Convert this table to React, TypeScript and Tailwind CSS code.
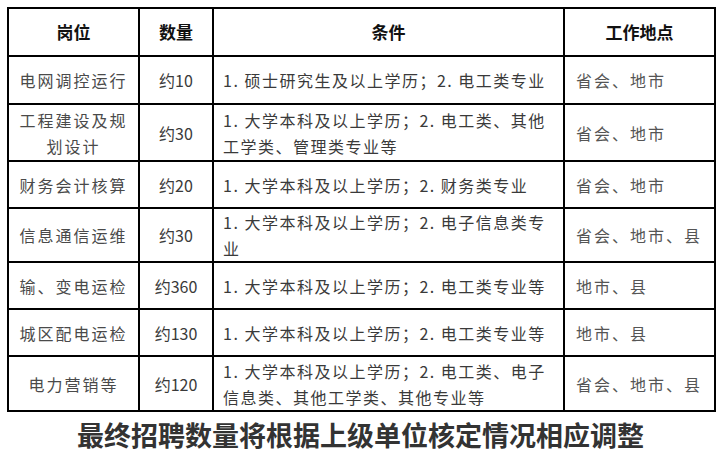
import React from 'react';

type Row = {
  post: React.ReactNode;
  count: string;
  cond: React.ReactNode;
  place: string;
  h: string;
};

const rows: Row[] = [
  { post: '电网调控运行', count: '约10', cond: '1. 硕士研究生及以上学历；2. 电工类专业', place: '省会、地市', h: 'h-[48px]' },
  {
    post: (
      <>
        工程建设及规
        <br />
        划设计
      </>
    ),
    count: '约30',
    cond: (
      <>
        1. 大学本科及以上学历；2. 电工类、其他
        <br />
        工学类、管理类专业等
      </>
    ),
    place: '省会、地市',
    h: 'h-[57px]',
  },
  { post: '财务会计核算', count: '约20', cond: '1. 大学本科及以上学历；2. 财务类专业', place: '省会、地市', h: 'h-[47px]' },
  {
    post: '信息通信运维',
    count: '约30',
    cond: (
      <>
        1. 大学本科及以上学历；2. 电子信息类专
        <br />
        业
      </>
    ),
    place: '省会、地市、县',
    h: 'h-[54px]',
  },
  { post: '输、变电运检', count: '约360', cond: '1. 大学本科及以上学历；2. 电工类专业等', place: '地市、县', h: 'h-[47px]' },
  { post: '城区配电运检', count: '约130', cond: '1. 大学本科及以上学历；2. 电工类专业等', place: '地市、县', h: 'h-[47px]' },
  {
    post: '电力营销等',
    count: '约120',
    cond: (
      <>
        1. 大学本科及以上学历；2. 电工类、电子
        <br />
        信息类、其他工学类、其他专业等
      </>
    ),
    place: '省会、地市、县',
    h: 'h-[55px]',
  },
];

const font = "font-['Noto_Sans_CJK_SC','Liberation_Sans',sans-serif]";

export default function App() {
  return (
    <div className={`w-[722px] min-h-[452px] bg-white pt-[7px] pl-[7px] ${font}`}>
      <table className="border-collapse table-fixed w-[707px] text-[#3a3a3a]">
        <colgroup>
          <col className="w-[131px]" />
          <col className="w-[74px]" />
          <col className="w-[351px]" />
          <col className="w-[151px]" />
        </colgroup>
        <thead>
          <tr className="h-[48px] text-[17px] font-bold text-[#111]">
            <th className="border-2 border-black text-center">岗位</th>
            <th className="border-2 border-black text-center">数量</th>
            <th className="border-2 border-black text-center">条件</th>
            <th className="border-2 border-black text-center">工作地点</th>
          </tr>
        </thead>
        <tbody className="text-[16px] leading-[26px]">
          {rows.map((r, i) => (
            <tr key={i} className={r.h}>
              <td className="border-2 border-black text-center whitespace-nowrap px-1 tracking-[2px] text-[#4a4a4a]">{r.post}</td>
              <td className="border-2 border-black text-center whitespace-nowrap">{r.count}</td>
              <td className="border-2 border-black pl-[9px] whitespace-nowrap tracking-[1.5px]">{r.cond}</td>
              <td className="border-2 border-black pl-[11px] whitespace-nowrap tracking-[2px] text-[#555]">{r.place}</td>
            </tr>
          ))}
        </tbody>
      </table>
      <div className="w-[707px] text-center mt-[9px] text-[27px] leading-[28px] font-bold text-[#333]">
        最终招聘数量将根据上级单位核定情况相应调整
      </div>
    </div>
  );
}
